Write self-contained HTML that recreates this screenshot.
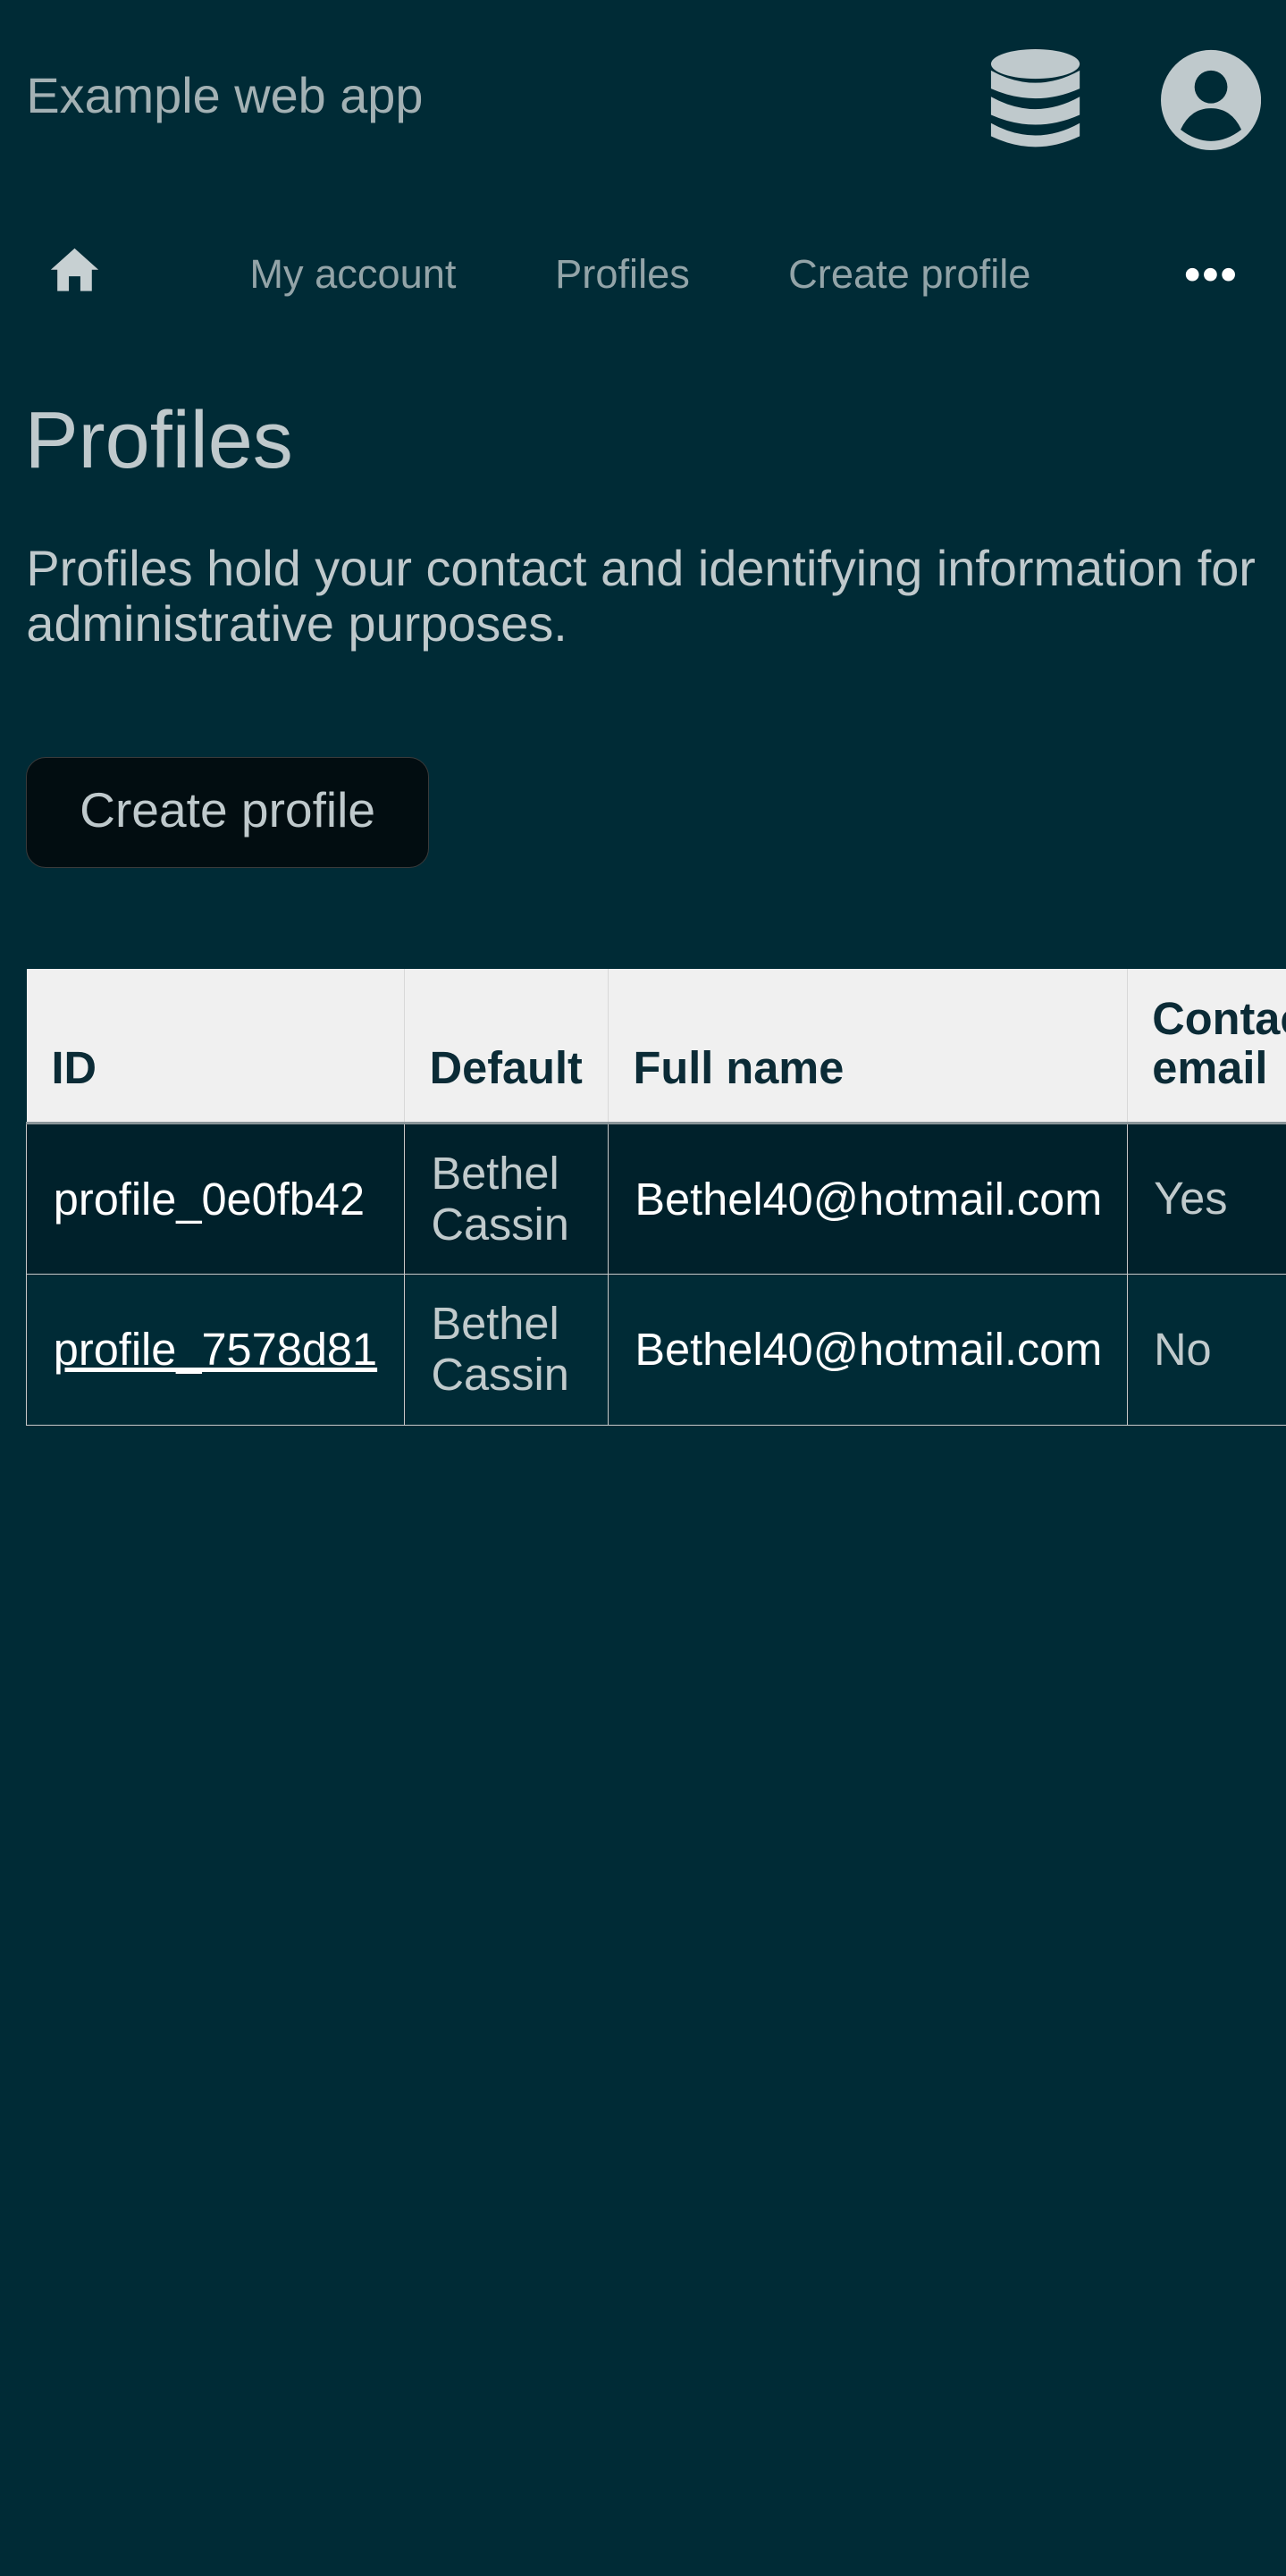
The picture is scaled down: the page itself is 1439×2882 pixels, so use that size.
<!DOCTYPE html>
<html><head><meta charset="utf-8"><style>
html{zoom:1.8378}
body{margin:0;width:783px;height:1568px;background:#002b36;font-family:"Liberation Sans",sans-serif;position:relative;overflow:hidden;color:#bfc9cc}
.a{position:absolute;white-space:nowrap}
.nav{font-size:24.6px;color:#93a4a8;top:153px}
table{position:absolute;left:16px;top:590px;border-collapse:collapse;font-size:27.5px;line-height:17px;table-layout:fixed;width:800px}
th{background:#f0f0f0;color:#0b2b36;text-align:left;vertical-align:bottom;padding:0 15px 18px;height:75px;font-weight:bold;border-left:1px solid #d8d8d8;line-height:30px}
th:first-child{border-left:none}
td{border:1px solid #c8c8c8;padding:0 16px;height:91px;vertical-align:middle;color:#fff}
td.g{color:#c0cacc;line-height:31px}
tr.h th{border-bottom:2px solid #8a9599}
tr.r1 td{background:#00212b}
a{color:#fff}
</style></head><body>
<div class="a" style="left:16px;top:40px;font-size:30.4px;color:#a3b1b4">Example web app</div>
<svg class="a" style="left:603px;top:30px" width="55" height="62" viewBox="0 0 55 62"><g fill="#bfc9cc"><ellipse cx="27.5" cy="9" rx="27" ry="9"/><path d="M0.5 13 Q27.5 28 54.5 13 V24 Q27.5 36 0.5 24Z"/><path d="M0.5 29 Q27.5 44 54.5 29 V40 Q27.5 52 0.5 40Z"/><path d="M0.5 45 Q27.5 60 54.5 45 V53 Q27.5 66 0.5 53Z"/></g></svg>
<svg class="a" style="left:707px;top:30px" width="61" height="62" viewBox="0 0 61 62"><circle cx="30.5" cy="31" r="30.5" fill="#bfc9cc"/><circle cx="30.5" cy="23" r="10" fill="#002b36"/><path d="M12 49 Q18 36 30.5 36 Q43 36 49 49 Q40 56 30.5 56 Q21 56 12 49Z" fill="#002b36"/></svg>
<svg class="a" style="left:30px;top:150px" width="31" height="28" viewBox="0 0 31 28"><path d="M15.5 1 L30 14 H26 V27 H19 V18 H12 V27 H5 V14 H1Z" fill="#c7d0d2"/></svg>
<div class="a nav" style="left:152px">My account</div>
<div class="a nav" style="left:338px">Profiles</div>
<div class="a nav" style="left:480px">Create profile</div>
<svg class="a" style="left:721px;top:162px" width="32" height="10"><circle cx="5" cy="5" r="4" fill="#fff"/><circle cx="16" cy="5" r="4" fill="#fff"/><circle cx="27" cy="5" r="4" fill="#fff"/></svg>
<div class="a" style="left:15px;top:240px;font-size:49px;color:#bfc9cc">Profiles</div>
<div class="a" style="left:16px;top:329px;font-size:30.4px;line-height:34px;color:#bfc9cc">Profiles hold your contact and identifying information for<br>administrative purposes.</div>
<div class="a" style="left:16px;top:461px;width:244px;height:66px;background:#020d11;border:1px solid #3a3a3a;border-radius:12px;font-size:30px;line-height:64px;text-align:center;color:#bfc9cc">Create profile</div>
<table>
<colgroup><col style="width:230px"><col style="width:124px"><col style="width:316px"><col style="width:130px"></colgroup>
<tr class="h"><th>ID</th><th>Default</th><th>Full name</th><th>Contact<br>email</th></tr>
<tr class="r1"><td>profile_0e0fb42</td><td class="g">Bethel<br>Cassin</td><td>Bethel40@hotmail.com</td><td class="g">Yes</td></tr>
<tr><td><a href="#">profile_7578d81</a></td><td class="g">Bethel<br>Cassin</td><td>Bethel40@hotmail.com</td><td class="g">No</td></tr>
</table>
</body></html>
